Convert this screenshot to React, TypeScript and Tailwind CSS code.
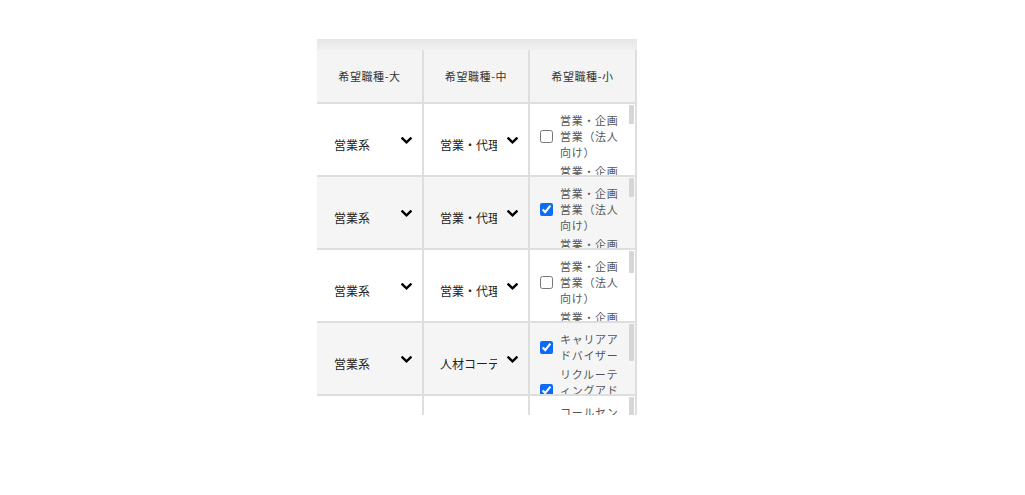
import React from "react";

type Item = { t: string; c: boolean };
type Row = { gray: boolean; l: string; m: string; items: Item[]; thumb: number };

const sales: Item[] = [
  { t: "営業・企画営業（法人向け）", c: false },
  { t: "営業・企画営業（個人向け）", c: false },
];

const rows: Row[] = [
  { gray: false, l: "営業系", m: "営業・代理店営業", items: sales, thumb: 19 },
  {
    gray: true,
    l: "営業系",
    m: "営業・代理店営業",
    items: [
      { t: "営業・企画営業（法人向け）", c: true },
      { t: "営業・企画営業（個人向け）", c: false },
    ],
    thumb: 19,
  },
  { gray: false, l: "営業系", m: "営業・代理店営業", items: sales, thumb: 22 },
  {
    gray: true,
    l: "営業系",
    m: "人材コーディネーター",
    items: [
      { t: "キャリアアドバイザー", c: true },
      { t: "リクルーティングアドバイザー", c: true },
    ],
    thumb: 37,
  },
  {
    gray: false,
    l: "営業系",
    m: "コールセンター",
    items: [{ t: "コールセンタースーパーバイザー", c: false }],
    thumb: 20,
  },
];

function Chevron() {
  return (
    <svg width="11" height="7" viewBox="0 0 11 7" className="shrink-0">
      <path d="M1.4 1.4 L5.5 5.3 L9.6 1.4" fill="none" stroke="#000" strokeWidth="2.4" strokeLinecap="square" />
    </svg>
  );
}

function SelectCell({ text, pl, w }: { text: string; pl: string; w: string }) {
  return (
    <div className={`${w} border-r-2 border-[#dedede] h-full flex items-start ${pl} pr-[10px] shrink-0`}>
      <div className="mt-[33px] w-[57px] overflow-hidden whitespace-nowrap text-[12px] leading-[16px] text-[#222]">{text}</div>
      <div className="flex-1" />
      <div className="mt-[33px]">
        <Chevron />
      </div>
    </div>
  );
}

export default function App() {
  return (
    <div className="w-[1025px] h-[495px] bg-white overflow-hidden font-['Noto_Sans_CJK_JP',sans-serif]">
      <div className="ml-[317px] pt-[39px]">
        <div className="w-[320px] h-[376px] overflow-hidden flex flex-col">
          <div className="h-[11px] shrink-0 bg-gradient-to-b from-[#e6e6e6] to-[#f0f0f0]" />
          <div className="h-[54px] shrink-0 flex bg-[#f4f4f4] border-b-2 border-[#dedede] text-[11px] tracking-[0.6px] text-[#333]">
            <div className="w-[107px] border-r-2 border-[#dedede] flex items-center justify-center pt-[1px]">希望職種-大</div>
            <div className="w-[106px] border-r-2 border-[#dedede] flex items-center justify-center pt-[1px]">希望職種-中</div>
            <div className="w-[107px] border-r-2 border-[#dedede] flex items-center justify-center pt-[1px]">希望職種-小</div>
          </div>
          {rows.map((r, i) => (
            <div
              key={i}
              className={`h-[73px] shrink-0 flex border-b-2 border-[#dedede] overflow-hidden ${r.gray ? "bg-[#f5f5f5]" : "bg-white"}`}
            >
              <SelectCell text={r.l} pl="pl-[17px]" w="w-[107px]" />
              <SelectCell text={r.m} pl="pl-[16px]" w="w-[106px]" />
              <div className="w-[107px] border-r-2 border-[#dedede] h-full flex shrink-0">
                <div className="flex-1 overflow-hidden pl-[10px] pt-[8px] flex flex-col gap-[3px]">
                  {r.items.map((it, j) => (
                    <div key={j} className="flex items-center shrink-0">
                      <input
                        type="checkbox"
                        readOnly
                        checked={it.c}
                        className="m-0 w-[13px] h-[13px] shrink-0 accent-[#0b6bf5]"
                      />
                      <div className="ml-[7px] w-[64px] text-[11px] leading-[16px] tracking-[0.7px] text-[#555]">{it.t}</div>
                    </div>
                  ))}
                </div>
                <div className="w-[5px] mr-[1px] h-full shrink-0">
                  <div className="w-full bg-[#d6d6d6] rounded-[1px] mt-[1px]" style={{ height: r.thumb }} />
                </div>
              </div>
            </div>
          ))}
        </div>
      </div>
    </div>
  );
}
